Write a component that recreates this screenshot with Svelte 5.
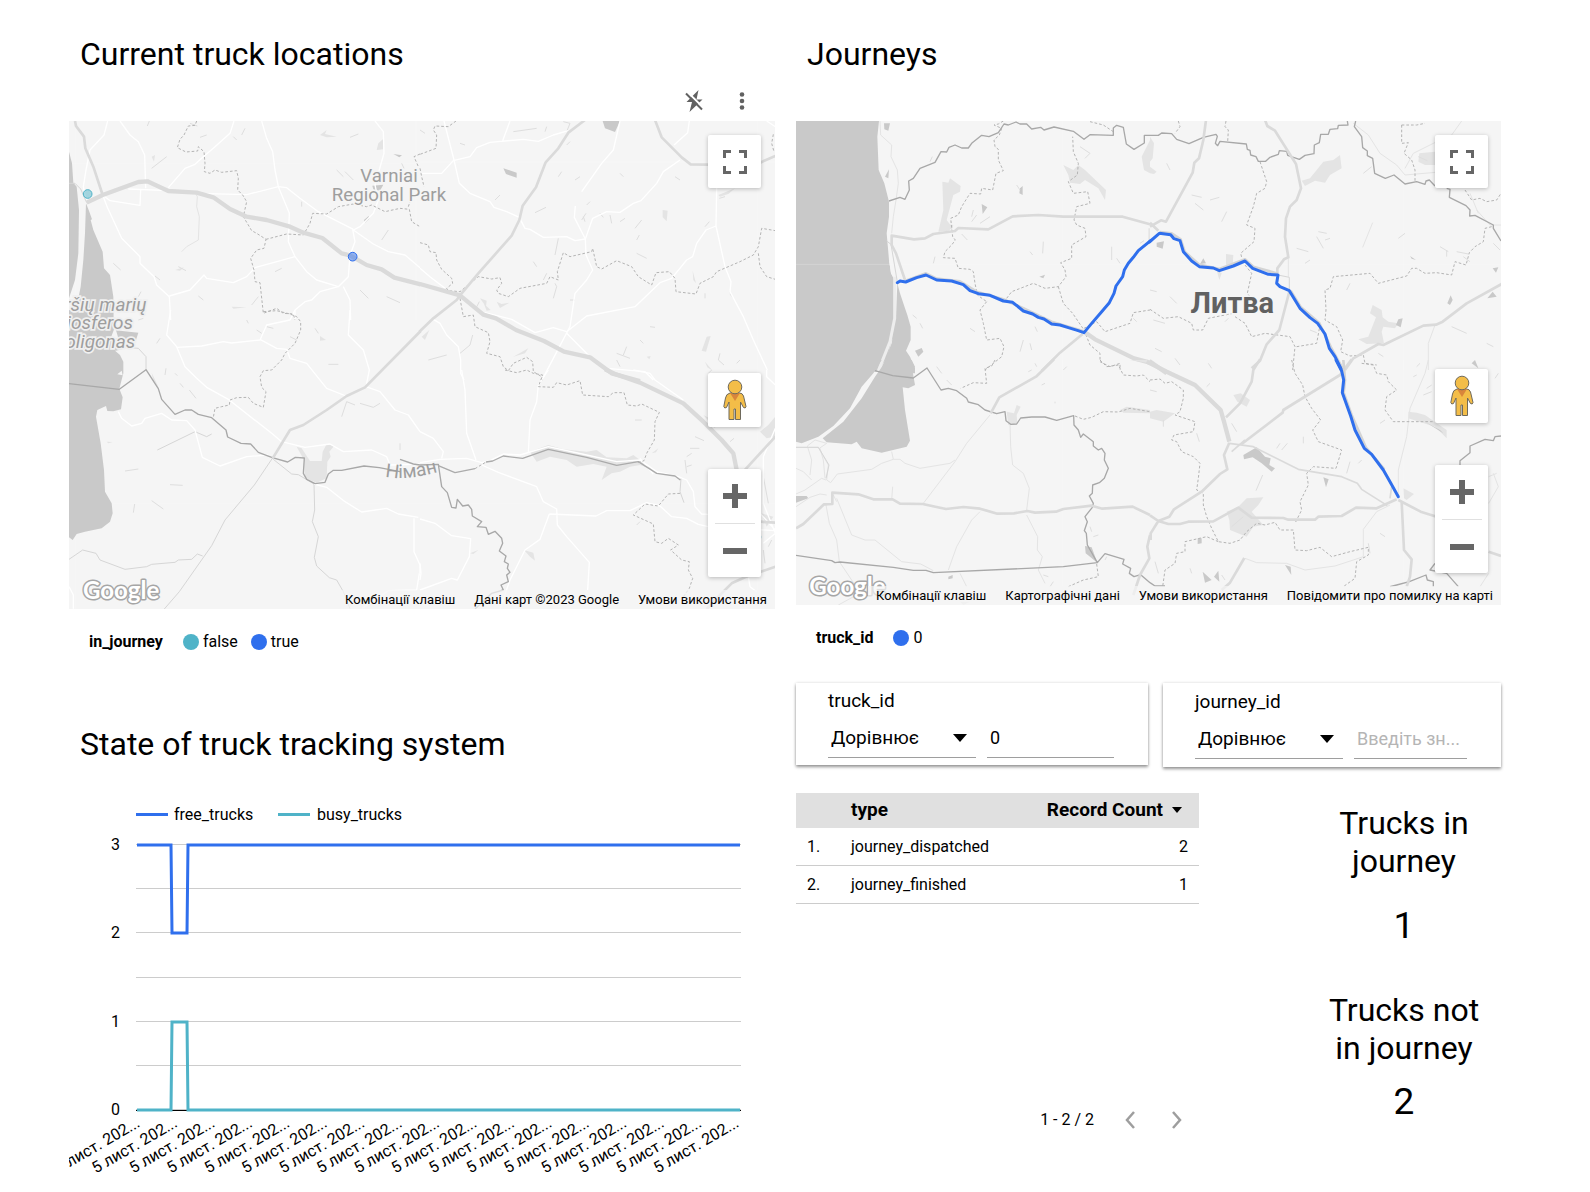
<script>
  // Map geometry is stored in thirds of a pixel, one group per tile.
  const truckTiles = [
    { x: -27, y: -303, shapes: [
      ['seam', 'M1068 303V900M27 430H1080M46 303V900'],
      ['water', 'M27 395L36 430L40 488L50 500L57 570L55 700L45 780L27 835Z'],
      ['water', 'M78 550L88 575L96 598L92 600L100 630L128 695L132 745L150 765L160 830V900H27V915L50 860L62 800L70 720L75 640Z'],
      ['water', 'M937 497L970 494L960 512L940 508ZM912 600L926 588L928 596L915 608ZM1000 402L1026 406L1018 412Z'],
      ['park', 'M955 370L972 355L970 388L950 390ZM780 345L800 330L795 342L830 350L800 352ZM345 750L372 742L360 752ZM515 860L560 862L520 866ZM275 410L285 405L282 425Z'],
      ['speck', 'M262 318L268 303M545 345L555 325M390 310L412 318M420 352L440 345M870 352L895 342M830 450L850 470M965 660L985 630M160 730L182 750M285 768L300 780M575 855L595 830M645 755L665 745M725 545V560M900 810L925 835M980 830L1020 848M235 830L243 815M430 840L415 828M355 740L378 752M520 350L530 360M1025 430L1032 445M275 445L320 410M855 455L880 480'],
      ['thin', 'M405 518L412 530L410 560L418 590L415 660L380 680L365 695'],
      ['road', 'M143 303L132 345L90 390L78 450L70 500L80 548M180 303L210 345L235 365L254 405L257 505'],
      ['road', 'M128 525L142 562L185 655L240 710L240 730L282 770L290 795L328 830L332 900M128 525L150 542L240 556L242 510M205 507L325 512M410 520L560 524L655 500L680 503L720 535L775 575L880 628'],
      ['road', 'M522 303L510 340L460 385L430 410L405 433L375 445L325 503M605 303L620 355L638 395L645 450L655 500L688 580L685 665L705 710L740 755L770 780L835 800L865 770L870 706L885 665L878 628'],
      ['road', 'M328 828L390 810L432 765L440 775L520 788L560 770L585 743L705 710M835 800L780 815L755 840L735 845L705 870V900M850 800L870 840L872 900'],
      ['road', 'M945 303L970 335L972 400L962 435L945 495L955 540L940 580L900 620L880 630L940 672L985 695L1035 705L1080 743'],
      ['dash', 'M410 303L405 316L385 318L372 345L360 358L352 383L378 396L413 393L415 380L432 395L435 430L433 455L450 460L465 450L485 457L530 452L535 475L533 510L548 525L560 545L550 590L575 632L590 640L618 658L612 685L590 690L572 715L582 750L585 785L600 788L610 880L650 865L670 880L700 882L705 900'],
      ['dash', 'M618 658L680 642L730 645L750 610L758 580L800 582L835 560L880 552L920 560L935 555L975 575L1020 565L1048 568L1055 605L1080 620M1080 402L1062 410L1075 440M1045 560L1050 545'],
      ['minor', 'M27 490H45L62 507L80 548'],
      ['highway', 'M45 303L48 318L72 350L76 385L100 440L128 525'],
      ['motorway', 'M80 548L128 525L235 486L262 484L325 513L410 518L460 532L510 567L560 590L620 600L690 620L730 638L787 654L845 700L870 706L920 735L965 748L1003 773L1082 793']
    ]},
    { x: 1053, y: -123, shapes: [
      ['seam', 'M1013 123V870M0 246H1066'],
      ['water', 'M548 123H600L585 156L555 145ZM250 265L290 278L290 293L258 282Z'],
      ['park', 'M728 390L743 392L740 424L728 412ZM845 812L860 770L872 768L858 815ZM180 655L200 662L198 680ZM230 665L240 684L268 668L245 672ZM895 345L945 325L925 342L900 350ZM855 845L878 872L862 862ZM680 830L692 828L688 838ZM192 672L212 690L200 692Z'],
      ['park', 'M280 830L325 805L315 820ZM928 630L940 655L930 645ZM818 572L828 610L820 600ZM5 770L28 750L15 780Z'],
      ['speck', 'M345 398L378 382M440 195L450 185M465 300L480 290M415 290L425 275M485 420L498 400M490 410L495 425M645 445L665 420M575 430L570 405M600 425L615 415M400 655L410 620L405 610M450 660H465M415 475L405 525M340 545L350 560M370 600L380 580M650 520L680 535M650 480L658 465M855 440L868 425M765 290L780 300M600 280L610 290M375 155L380 140M280 155L350 145M0 150L15 160M120 190L135 195M165 690L178 665M590 820L630 835M600 860L590 840M900 820L895 840L912 855M950 850L960 840M855 655V640M660 780L670 790M620 800L610 825M225 360L240 345M25 840L80 825M120 820L150 795L158 765M500 375L510 365M540 400L550 412M430 125L450 130L440 155M898 355L915 350M690 740L705 742'],
      ['road', 'M72 123L102 240L118 310L150 340L210 365L222 382L260 395L298 412L315 445L330 448L370 472L440 470L465 482L496 477L518 415L560 395L600 397L640 370L663 362L710 310L730 275L780 240'],
      ['road', 'M0 280H65L100 242L150 230L170 203L210 187L310 178L355 184L400 165L445 152M270 123L248 182M600 123L580 210L545 250L485 335M466 378L463 412L496 477L498 525L518 570L500 600L465 640L450 740L370 892'],
      ['road', 'M808 123L803 158L762 195M890 323L888 438L858 450L830 490L818 530L800 540L755 595L720 608L645 680L500 708L440 755L400 743L345 758L275 718L195 698M440 760L510 830M888 438L915 560L933 605L930 635L970 710L1000 780L1042 870M0 565L30 590L75 625M40 718L60 730L80 765L115 800L122 840V880L132 900M570 866L675 875L700 900M1040 123L1066 140'],
      ['dash', 'M108 123L85 140L45 138L40 150L50 165L48 205L0 223M0 488L25 495L30 515L48 518L50 540L65 568L95 595L98 610L80 625L85 632L120 635L175 590L215 597L240 593L245 610L230 630L235 640L265 650L300 625L380 610L390 590L415 600L412 575L430 518L450 530L515 515L518 505L530 560L545 567L590 542L635 560L655 590L695 615L708 578L748 575L765 595L768 635L828 642L840 610L880 590L890 575L960 545L1000 525L1015 500L1025 445L1066 452'],
      ['dash', 'M1015 520L1020 560L1040 590L1066 598M1060 163L1055 190L1062 215M120 655L130 710L160 705L165 740L205 758L210 785L200 820L240 830L250 860L265 872L280 850L320 832L338 845L340 875L365 890L368 905M0 265L5 290L12 320'],
      ['highway', 'M495 120L445 158L415 205L377 247L348 322L308 377L298 420L275 467L175 580L120 646L110 660L40 715L-2 755M705 120L725 172L785 232L812 253L865 254M1020 248L1066 228'],
      ['motorway', 'M0 612L120 646L190 704L228 715L288 750L372 783L432 815L510 832L575 880L660 903']
    ]},
    { x: -27, y: 567, shapes: [
      ['seam', 'M27 580H1080M46 120V896'],
      ['water', 'M27 0H160L160 50L180 62L235 68L228 90L200 85L195 110L165 122L180 135L190 155V190L178 236L188 262L183 298L160 304L142 303L138 288L112 300L108 320L122 400L132 480L135 545L155 580L158 610L150 635L125 655L75 665L50 672L38 690L27 682Z'],
      ['land', 'M172 193L185 182L188 196ZM150 90L165 50L175 85Z'],
      ['park', 'M710 410L725 415L750 453H785L788 425L800 402L822 408L808 425L812 440L802 455L800 505L770 518L735 505L732 450ZM780 78L798 90L780 92ZM140 395L158 396L145 400ZM275 188L295 230L280 215Z'],
      ['speck', 'M195 483L235 477M330 524L368 526M275 572L310 597M220 608L224 582M315 195L318 175M360 220L370 232M345 190L352 197M388 240L408 265M805 163H835M690 80L710 90M765 55L775 70M1020 420V400M565 40L560 30M590 60L605 70M290 100L300 85M885 285L860 275L845 320M900 280L940 292L960 280M235 30L250 25M620 50L640 55'],
      ['minor', 'M292 420L405 365L440 380L455 372M27 748L68 720L108 730L120 750L195 778L260 770L275 763L345 757L355 750L395 748L412 732L428 738M640 448L695 492L715 494L762 522L764 600L757 635L775 680L763 742L770 768L808 803L830 810L850 845L870 896M637 445L583 525L495 630L455 707L358 845L312 898'],
      ['minor', 'M165 122L200 112L235 115L258 140V180'],
      ['road', 'M332 0L320 75L350 110L375 170L410 205L440 232L505 268L635 370L665 395L735 412L810 402L850 425L935 420L980 440L990 465L1080 462M350 112L425 108L490 95L515 99L600 90L620 45L690 30L705 0M600 88L650 115L680 118L690 145L740 160L800 235L858 258'],
      ['road', 'M870 0L865 75L910 120L928 180L918 230L960 245L1005 300L1045 315L1080 365M175 305L185 325L215 348L245 340L255 325L305 310L335 330L380 332L405 360L427 442L480 468L560 440L625 435M762 522L800 532L855 575L905 606L980 595L1015 612L1075 622M1062 625V725L1080 765V790M1078 790L1070 840L985 842L905 896M27 830L40 855V896'],
      ['dash', 'M610 5L650 2L690 12L710 20L722 35V60L705 100L675 130L665 150L635 180L610 182L600 200L605 232L618 245L610 292L580 280L565 262L530 263L510 270L508 285L485 290L465 295L460 322'],
      ['border', 'M27 221L178 238L258 179L295 236L305 268L345 313L375 300H395L415 313L455 323L498 360L503 381L543 400L572 402L595 427L637 443L683 456L706 442L733 444L730 490L740 508L765 521L795 517L805 492L820 481H845L912 468L958 473L1020 485'],
      ['highway', 'M1082 63L915 232L860 258L800 300L730 345L690 360L638 445']
    ]},
    { x: 1053, y: 747, shapes: [
      ['seam', 'M0 400H1066M1013 0V717'],
      ['park', 'M330 245L385 225L430 238L500 245L530 240L560 262L620 265L640 255L700 300L660 285L630 290L600 305L575 310L545 330L560 290L520 282L470 290L440 270L390 260L350 275ZM1020 185L1045 165L1066 140V200L1040 205ZM850 135L890 155L885 175ZM1025 430L1060 440L1040 470ZM695 250L715 235L708 247ZM150 550L175 540L160 552ZM312 540L340 548L345 572L330 560Z'],
      ['speck', 'M825 200L852 212M810 235H838M800 260L815 250M800 290L815 285M795 270L800 310M650 465L660 455M645 150H665M890 200L900 210M930 215L942 205M1030 320L1045 400M1030 540L1035 580M1045 530L1055 510M875 0L865 10'],
      ['minor', 'M783 325L780 365L792 398'],
      ['road', 'M125 0L135 60L140 190L168 270M385 0L355 45L350 95L330 150L325 250M0 185L40 205L70 245L65 265M0 278L60 268L140 265L185 278L210 272L250 252L300 255L385 230L500 255L590 275L660 270L710 305L775 320L800 330L820 365L825 410L845 432L865 433'],
      ['road', 'M185 285L235 307L350 350L370 395L410 417L412 465L440 500L508 577L503 660M660 265L700 312M388 432L528 438L560 422H630L680 398L720 408L755 440L800 445L835 463L865 470M388 432L360 508L315 540L270 630L240 717M0 447L45 460L95 497L152 506L148 560L112 630L95 625L0 660M0 580L3 610L0 630M640 0L690 10L705 30L790 90M985 620L990 650L1010 665M1066 175L1030 260V400L1066 490L1030 520M1020 430L1066 480M1040 0V20L1066 45M865 470L1066 482'],
      ['dash', 'M255 0L290 8L320 0L340 10L368 15L355 50L400 52L410 38L440 45L480 32L488 75L565 80L580 68L612 68L622 105L650 108L665 102L718 127L705 155L703 210L680 250L672 272L655 278'],
      ['dash', 'M780 370L745 372L715 408L675 402L640 435L700 462L705 515L725 520L745 505L775 525L752 540L785 570L808 575L805 600L818 625L808 655L790 680'],
      ['border', 'M-60 268L-20 282L0 285L55 283L65 350L82 368L95 412L108 414L112 388L128 408L145 405L155 418L157 438L185 455L172 470L198 472L205 493L225 484L245 505L248 520L238 543L258 558L253 575L265 582L262 595L270 607L260 615L265 635L243 645L250 660L215 670L195 690L165 717'],
      ['rivers', 'M55 287L105 308L165 296M198 276L218 273L250 258L308 265L385 238L500 262L590 286L655 275L710 310L765 318L781 330'],
      ['riverdash', 'M165 296L198 276'],
      ['highway', 'M970 305L1066 200M1066 590L975 622L935 640L900 675L860 717M1020 455L1066 458'],
      ['motorway', 'M555 -2L585 12L660 38L790 100L850 155L905 210L940 250L950 300']
    ]}
  ];

  const journeyTiles = [
    { x: -18, y: -33, shapes: [
      ['water', 'M18 33H267L262 80L266 180L283 220L297 275V320L290 370L297 450L303 490L318 518V680L292 740L265 785H18Z'],
      ['land', 'M297 450L303 490L318 518V680L305 690L292 740L262 790H275L318 690V620L322 520L310 470Z'],
      ['water', 'M322 520L330 550L345 595L352 615L362 650V690L348 722L360 740L375 775V790H268L305 700L318 620ZM375 722L395 714L400 725L385 740ZM575 282L592 292L578 312ZM690 235L698 228L698 255L688 250ZM282 40H300L295 62L283 58ZM285 200L297 178L295 205ZM748 500L765 494L760 505Z'],
      ['spit', 'M314 500V625L300 695L264 785'],
      ['park', 'M457 215L475 218L480 205L512 228L510 245L490 255L470 330L485 350L478 362L445 365L460 300ZM820 165L850 180L865 165L885 180L948 240L945 270L925 235L885 210L870 222L840 218L835 195ZM1055 140L1080 90V190L1062 180ZM460 340L490 345L485 360ZM1075 355H1080V395H1075Z'],
      ['seam', 'M18 463H1080M818 33V780'],
      ['speck', 'M420 155L427 140M515 372L532 390M545 320L550 300M570 340L600 320M430 460L435 440M965 410V450M980 445L990 460M1050 400L1062 392M760 395L758 430M720 425L728 435M690 725L700 690M735 650L742 665M368 615L380 625M870 110L900 130L885 145M540 655L555 665M720 700L725 720M1030 625L1040 635M680 225L690 240M830 770L820 780M390 640L398 655M560 315L545 335'],
      ['thinner', 'M270 33L272 75L305 105L303 140L322 180L325 220L318 270L310 320L305 370'],
      ['minor', 'M290 393L303 403L322 516'],
      ['dash', 'M640 33L625 42L612 45L635 55L628 75L612 90L615 110L625 118V150L640 182L618 190L608 240L575 235L572 252L540 250L515 290L505 315L482 325L488 380L496 390L485 405L465 425L460 443L495 445L505 475L540 478L550 485L555 520L562 555L590 575'],
      ['dash', 'M650 565L665 545L730 520L765 535L805 530L828 500L825 480L812 458L845 445V405L888 380L885 355L860 345L852 330L860 290L900 280L893 245L850 250L835 215L862 195L865 160L850 125L848 80M805 530L820 580L848 610L882 660L900 705L930 730V755L960 770L990 760V780M900 35L940 45L970 65M590 575L570 600L580 640L590 690L630 685L642 710L635 740L585 780M882 655L920 635L945 665L1020 640L1030 608L1080 600'],
      ['border', 'M297 273L330 262L345 268L358 240L356 213L370 205L390 175L435 157L453 125L470 126L477 112L495 105L515 114H535L545 100L575 76L597 80L625 68L642 42L655 45L678 36L690 42H710L725 57L752 52L762 60L792 51L850 64L882 88L900 74L970 76V54L980 46L1000 52L1009 102L1032 118L1063 99V76H1080'],
      ['highway', 'M345 510L318 430L305 405L305 377L372 388L405 385L430 372L495 363L505 354L595 358L668 319L745 315L820 320H998L1080 343M878 672L810 728L755 783'],
      ['motorway', 'M885 667L915 688L1032 745L1080 758'],
      ['under', 'M347 512L408 490L440 506L510 514L560 545L640 568L700 595L785 635L882 664'],
      ['route', 'M322 518L330 513L347 516L380 503L408 495L440 510L485 513L520 524L540 542L565 551L600 556L640 573L668 577L700 603L728 612L745 622L762 627L785 642L810 645L835 653L862 661L882 668L905 640L935 605L958 578L972 550L978 528L998 500L1003 480L1015 460L1030 442L1045 422L1082 392']
    ]},
    { x: 1062, y: -33, shapes: [
      ['park', 'M455 212L480 205L520 155L550 150L570 135L575 175L540 195L525 218L495 212L465 228ZM0 80L12 100L8 145L0 155ZM0 170L20 185L12 192L0 190ZM625 688L655 680L678 622L660 610L668 585L695 600L698 622L715 635L745 640L735 655L700 650L695 665L702 700L650 702ZM808 130L855 125V165L825 165L805 155ZM228 432L250 435L248 465L228 465ZM200 480L215 490L208 510Z'],
      ['water', 'M20 398L42 394L38 416L20 410ZM745 628L758 625L752 652L738 645ZM892 580L902 556L908 570L900 585ZM1028 475L1045 472L1038 488ZM1012 565L1028 545L1040 560ZM160 445L168 460L150 462ZM780 438L798 450L785 446ZM965 760L975 750L985 775Z'],
      ['seam', 'M0 463H1053M760 33V780'],
      ['thin', 'M668 338L638 412'],
      ['speck', 'M125 255L155 262M180 270L208 262M135 280L160 300M230 305L215 335M505 365L530 370M500 380L520 415M525 390L540 385M440 415L475 425M640 190L665 170M805 140L832 152M1010 700L1030 710M890 420V440M870 410L895 425M920 425L955 432M940 440L960 455M1030 400L1050 420M15 715L35 725M75 745L90 765M10 630L45 640M60 560L80 580M465 460L480 450M745 385L765 370M60 180L50 160M700 740L685 730M480 660L500 668M0 540L20 545M590 540L600 520M225 635L235 625M905 650L950 670'],
      ['thinner', 'M610 40L655 75L690 130L740 165L765 195L880 185M765 175L790 130L880 85L905 75L935 33M980 300L1020 345H1053M960 250L985 310M835 780V700L855 645M415 445V500'],
      ['dash', 'M85 33L90 50L75 70M228 33L225 50L235 60L233 95M330 155L350 215L345 235L320 250L310 290L290 345L315 355L312 395L272 430L275 442M755 45H800L825 40M755 45V100L775 98L762 130L785 150L795 180V215'],
      ['dash', 'M1025 350L1005 355L1000 395L975 410L958 428L948 465L915 455L905 495L860 488L825 490L800 475L785 475L770 498L685 520L660 490L550 500L540 535L525 540L528 600L525 630L560 650L578 690L572 725L600 738L640 735L645 760L680 765M255 620L285 640L305 680L345 670L420 680L435 710L428 780M0 598L40 625L85 620L125 640L130 660L158 660L175 625L250 610M440 710L500 700L510 645M945 240L965 270L990 265L1010 275L1040 270L1053 250M285 465L305 490L292 550L300 560'],
      ['border', 'M0 76H25L35 69L65 71L80 88L117 101L160 82L198 73L202 79L196 100L203 107L210 94L289 102L292 118L300 121L302 135L318 140L325 154H347L360 142L385 133L388 122L410 124L413 136L448 148L465 136L492 131L493 105L508 98L512 73H535L540 58L563 56L565 46L594 45L592 33M617 33L613 50L635 80L638 113L652 123V137L668 145L674 190L706 205L732 195L765 222L800 215L825 223L828 213L838 210L855 228M890 235L900 238L898 262L948 287L960 300L959 318L975 316L1030 345V355L1053 393'],
      ['highway', 'M168 30L160 90L147 145L133 158L128 188L48 335L33 331L0 350M345 30L352 48L375 62L438 162L453 235L440 270L420 290L408 325L405 380L415 442L402 448L382 475V490M418 545L388 660L350 703L330 752L305 775M0 338L25 362M1055 522L950 580L878 635L858 644L820 647L700 705L685 702L610 745L585 780'],
      ['minor', 'M384 495L418 502L418 545'],
      ['motorway', 'M-2 753L50 790'],
      ['under', 'M30 366L65 370L92 388L104 425L148 464L208 477L285 448L310 470L384 491M422 542L453 592L507 638L543 712L580 780'],
      ['route', 'M-2 396L28 370L62 374L72 386L90 392L100 425L125 453L148 470L190 474L208 482L250 468L285 453L308 475L355 493L384 495L380 520L390 530L418 542L450 595L480 623L503 640L525 672L538 715L555 740L576 782']
    ]},
    { x: -18, y: 717, shapes: [
      ['water', 'M18 0H275L250 40L215 80L180 145L130 198L85 230L35 250L18 245Z'],
      ['water', 'M290 0H365L375 20L368 35L375 75L355 85L338 82L345 150L360 242L350 260L275 278L215 265L200 245L185 253L110 247L98 235L160 185L215 115L255 50ZM18 408L50 408L55 415L18 428ZM885 558L905 562L922 608L887 580ZM475 650L488 645V655L475 658Z'],
      ['park', 'M650 155L672 160L680 135L692 140L680 165L682 190L655 195ZM990 150L1010 140L1080 150V160L1000 158ZM510 725H540L520 735ZM1020 0H1080V10Z'],
      ['seam', 'M818 0V735'],
      ['speck', 'M755 75L765 70M795 130V125M715 35L725 30M740 20L735 10M905 515L900 500M925 525L910 530M945 600L950 590M760 645L775 650M790 665L780 680M470 60L485 75M440 20L455 40'],
      ['thinner', 'M88 265L110 250L75 240L52 258L65 300L60 345M18 262H85L115 315L110 360L122 368L142 342L245 328L275 310L310 298L305 275M310 298H330L345 310L390 325L480 310L495 300M600 165L530 250L495 305L400 430M660 190L662 260L668 315L700 340L718 385L710 450M18 325L40 335L65 360M18 402L45 390L95 355L108 360M18 440L60 412L90 402L110 405M90 265L100 300L105 355M308 380L305 420M130 405L140 425M108 435L118 490L140 540L148 605L205 690M140 415L185 525L225 540H255L335 605L392 612L430 632M570 455L545 480L500 560L475 630M710 465L743 530L742 570L757 590L745 630L765 670M510 640L530 680M145 735L200 705'],
      ['minor', 'M18 262H85L117 315L108 355'],
      ['dash', 'M615 0L605 18L585 25L590 70L550 68L512 85M855 168L880 178L905 172L940 155L985 156L1020 145L1080 155M930 0L950 20L985 15L1000 45L1040 48L1060 45L1080 65M920 612L925 650L880 660L835 680'],
      ['border', 'M255 32L308 47L370 54L411 24L453 90L475 85L500 92L530 115L535 126L565 134L585 150L620 161L645 155L648 182L662 193L680 192L692 174L725 171H765L800 181L851 167L852 195L865 210L872 232L880 222L910 245V258L925 270L935 265L945 280L943 300L955 325L943 355L928 368L908 375L907 400L898 408L910 430L907 442L885 470L892 485L883 512L889 520L892 555L922 608L820 620L430 638L408 631H370L310 622L150 606L135 608L125 602L18 586M922 608L945 581L1002 598L998 612L1022 625L1018 640L1032 650L1052 644L1080 668'],
      ['highway', 'M792 -2L738 50L628 112L602 160M18 505L40 492L102 433L127 432V398L205 403L250 418H308L330 431L398 432L468 447L520 441L570 446L622 461L672 460L712 453L735 458L798 455L820 447L905 437L937 446L1028 440L1080 465M1080 525L1072 560L1078 595L1050 645L1030 705']
    ]},
    { x: 1062, y: 717, shapes: [
      ['park', 'M230 455L265 440L290 415L340 412L325 435L305 455L340 495L310 500L290 530L240 510L238 480ZM760 385L792 402L770 420L762 415ZM775 155L800 158L825 165L890 210V235L855 200L775 175ZM250 105L272 100L300 120L290 140L262 125ZM0 155L20 150L75 160L40 185L0 175Z'],
      ['water', 'M280 285L320 262L345 290L362 295L358 315L375 325L365 335L335 310L308 292L282 298ZM520 352L536 358L528 382ZM158 635L185 660L165 668ZM192 650L205 632L208 665ZM405 615L422 620L424 645ZM143 535H155V550L143 552ZM825 185L870 210L880 220Z'],
      ['seam', 'M760 0V735'],
      ['speck', 'M338 345L318 392M175 10L185 25M790 50L800 45M830 85L845 75M820 105L845 95M1035 55L1045 40M395 270L412 250M380 265L390 250M590 340L600 305M625 310L635 300M690 190L705 180M140 220L148 245M125 640L120 625M215 645L225 660M245 500L280 470M655 550L660 580M170 80L180 70M40 180V200M460 230V250M690 520L705 530M260 215L245 190M0 90L20 95M800 20L810 10M15 605L25 640'],
      ['thinner', 'M835 0L825 40L780 145L770 230L745 330L745 400M285 595L320 608L410 610L465 630L555 618L610 600L640 590V508L680 455L720 435M1016 350L1040 340M1016 430L1045 380L1030 340M1016 640L990 680'],
      ['dash', 'M0 60L30 57L45 70L65 65L100 90V115L90 155L75 165L135 185L130 215L72 225L65 240L80 245L95 275L130 290L150 310L145 355L140 390L160 400V435L170 470L185 505L205 545L240 550L270 540L290 515L320 490L345 495L375 487L390 510L430 510L435 570L470 572L510 562L545 590L600 575L655 562V585L620 605L615 655L580 680'],
      ['dash', 'M425 0L435 40L458 75L465 110L485 145L512 180L488 210L505 245L575 270L558 325L490 320L470 340L475 375L450 425L455 450L435 490M635 10L670 15L680 40L710 45L715 65L740 90L710 110L705 150L730 185L850 185M205 545L170 530L105 545V575L80 580L75 610L45 630L38 680'],
      ['border', 'M1053 228L1035 230L1030 242L1005 238L960 258V278L930 302V315M720 680L740 675L778 665L828 645L832 660L850 665V680M855 610L840 630L890 640L925 680M0 668L15 678H45'],
      ['highway', 'M330 -2L310 30L305 65L270 130L228 172M605 -2L570 45L400 150L398 158L275 252M238 248L222 285L232 328L210 342L155 395L72 448L58 470L25 483L0 466M25 483L55 492H90L115 485L190 484L265 443L305 473L400 474L415 479H495L505 470L575 468L618 443L680 445L740 418M25 483L2 520V540M283 594L240 668L215 690M755 425L762 570L785 598L780 650L770 680M745 420L812 455L860 470M1016 575L1053 588'],
      ['minor2', 'M238 250L310 260L445 328L575 350L622 370L635 388L712 437M720 415L725 380M245 275L285 240'],
      ['motorway', 'M-10 5L50 35L135 75L212 150L222 185L238 245'],
      ['under', 'M580 0L585 60L581 98L605 165L648 263L703 328'],
      ['route', 'M558 0L575 33L581 60L577 98L602 168L615 210L643 265L665 283L700 330L720 365L745 410']
    ]}
  ];

  const gridLines = [844, 888, 932, 977, 1021, 1065, 1109];
  const yTicks = [[3, 844], [2, 932], [1, 1021], [0, 1109]];
  const xTicks = Array.from({ length: 17 }, (_, i) => 141 + (i * 599) / 16);

  const rows = [
    { type: 'journey_dispatched', count: 2 },
    { type: 'journey_finished', count: 1 }
  ];
  let truckId = $state('0');
  let journeyId = $state('');
</script>

{#snippet tileShapes(tiles)}
  {#each tiles as tile}
    <g transform="translate({tile.x} {tile.y})">
      {#each tile.shapes as [kind, d]}
        <path class={kind} {d} />
      {/each}
    </g>
  {/each}
{/snippet}

{#snippet controls()}
  <button class="ctl fullscreen" aria-label="Fullscreen">
    <svg width="24" height="24" viewBox="0 0 24 24"><path fill="#666" d="M0 0H8V3H3V8H0ZM16 0H24V8H21V3H16ZM0 16H3V21H8V24H0ZM21 16H24V24H16V21H21Z" /></svg>
  </button>
  <div class="stack">
    <button class="ctl pegman" aria-label="Street View">
      <svg width="24" height="42" viewBox="0 0 24 42">
        <path d="M7 14Q3 15 2.500 19L.8 27.500Q1.500 30 3.500 28.500L6 23V40.500H11V30H12.500V40.500H17.500V23L20.500 28.500Q22.500 30 23 27.500L20.500 17Q19.500 14 16.500 14Z" fill="#f3bd48" stroke="#6f6a5c" stroke-width="1" />
        <path d="M7 14H17L12 22Z" fill="#d9853b" />
        <circle cx="12" cy="8" r="6.800" fill="#f3bd48" stroke="#6f6a5c" stroke-width="1" />
      </svg>
    </button>
    <div class="zoom">
      <button aria-label="Zoom in"><svg width="24" height="24" viewBox="0 0 24 24"><path fill="#666" d="M9 0H15V9H24V15H15V24H9V15H0V9H9Z" /></svg></button>
      <span class="rule"></span>
      <button aria-label="Zoom out"><svg width="24" height="24" viewBox="0 0 24 24"><path fill="#666" d="M0 10H24V16H0Z" /></svg></button>
    </div>
  </div>
{/snippet}

<main>
  <section class="column">
    <h1>Current truck locations</h1>
    <div class="tools">
      <button aria-label="Interactions off">
        <svg width="20" height="24" viewBox="0 0 20 24">
          <path fill="#616161" d="M14.500 1L2.500 13H8L5.500 23L18.500 10.500H12.500Z" />
          <path stroke="#fff" stroke-width="2" d="M3.500 3L19.500 19" />
          <path stroke="#616161" stroke-width="2" d="M2 4.500L18 20.500" />
        </svg>
      </button>
      <button aria-label="More">
        <svg width="20" height="24" viewBox="0 0 20 24" fill="#616161"><circle cx="10" cy="5.500" r="2.300" /><circle cx="10" cy="12" r="2.300" /><circle cx="10" cy="18.500" r="2.300" /></svg>
      </button>
    </div>

    <div class="map trucks">
      <svg class="canvas" viewBox="0 0 2118 1464" preserveAspectRatio="xMidYMid slice">
        {@render tileShapes(truckTiles)}
        <text class="place" x="960" y="184" text-anchor="middle">Varniai</text>
        <text class="place" x="960" y="240" text-anchor="middle">Regional Park</text>
        <g class="reserve" text-anchor="end">
          <text x="232" y="570">Kuršių marių</text>
          <text x="192" y="625">biosferos</text>
          <text x="199" y="681">poligonas</text>
        </g>
        <path id="nemunas" fill="none" d="M948 1066Q1020 1084 1150 1040" />
        <text class="river"><textPath href="#nemunas">Німан</textPath></text>
        <circle cx="56" cy="219" r="13" fill="#4fb3c8" fill-opacity=".5" stroke="#4fb3c8" stroke-width="3" />
        <circle cx="851" cy="407" r="13" fill="#2f6fed" fill-opacity=".5" stroke="#2f6fed" stroke-width="3" />
        <circle cx="2064" cy="1248" r="13" fill="#4fb3c8" fill-opacity=".8" />
        <text class="logo" x="42" y="1434">Google</text>
      </svg>
      {@render controls()}
      <div class="credits">
        <button>Комбінації клавіш</button><span>Дані карт ©2023 Google</span><a href="#terms">Умови використання</a>
      </div>
    </div>
    <div class="legend">
      <b>in_journey</b><i class="dot teal"></i><span>false</span><i class="dot next"></i><span>true</span>
    </div>

    <h1 class="second">State of truck tracking system</h1>
    <svg class="chart" viewBox="69 763 706 417">
      <path class="free" d="M136 814.500H168" /><text x="174" y="820">free_trucks</text>
      <path class="busy" d="M278 814.500H310" /><text x="317" y="820">busy_trucks</text>
      {#each gridLines as y}
        <path class="grid" d="M136 {y}.5H741" />
      {/each}
      {#each yTicks as [label, y]}
        <text x="120" y={y + 6} text-anchor="end">{label}</text>
      {/each}
      <path stroke="#000" d="M136 1110.500H741" />
      <path class="free" d="M137 845H171L172 933H187L188 845H740" />
      <path class="busy" d="M137 1110H171L172 1022H187L188 1110H740" />
      {#each xTicks as x}
        <text class="tick" text-anchor="end" transform="translate({x} 1126) rotate(-30)">5 лист. 202...</text>
      {/each}
    </svg>
  </section>

  <section class="column">
    <h1>Journeys</h1>
    <div class="tools"></div>
    <div class="map journeys">
      <svg class="canvas" viewBox="0 0 2115 1452" preserveAspectRatio="xMidYMid slice">
        {@render tileShapes(journeyTiles)}
        <text class="country" x="1309" y="576" text-anchor="middle">Литва</text>
        <text class="logo" x="40" y="1421">Google</text>
      </svg>
      {@render controls()}
      <div class="credits">
        <button>Комбінації клавіш</button><span>Картографічні дані</span><a href="#terms">Умови використання</a><a href="#report">Повідомити про помилку на карті</a>
      </div>
    </div>
    <div class="legend"><b>truck_id</b><i class="dot"></i><span>0</span></div>

    <div class="filters">
      <div class="filter">
        <label for="truck">truck_id</label>
        <div class="fields">
          <span class="pick"><select aria-label="truck_id condition"><option>Дорівнює</option></select></span>
          <input id="truck" type="text" bind:value={truckId} />
        </div>
      </div>
      <div class="filter last">
        <label for="journey">journey_id</label>
        <div class="fields">
          <span class="pick"><select aria-label="journey_id condition"><option>Дорівнює</option></select></span>
          <input id="journey" type="text" placeholder="Введіть зн..." bind:value={journeyId} />
        </div>
      </div>
    </div>

    <div class="summary">
      <div class="records">
        <table>
          <thead>
            <tr><th class="num"></th><th class="type">type</th><th class="count">Record Count<svg width="10" height="6" viewBox="0 0 10 6"><path d="M0 0H10L5 6Z" /></svg></th></tr>
          </thead>
          <tbody>
            {#each rows as row, i}
              <tr><td class="num">{i + 1}.</td><td>{row.type}</td><td class="count">{row.count}</td></tr>
            {/each}
          </tbody>
        </table>
        <div class="pager">
          <span>1 - 2 / 2</span>
          <button aria-label="Previous"><svg width="10" height="18" viewBox="0 0 10 18"><path d="M9 1L2 9L9 17" /></svg></button>
          <button aria-label="Next"><svg width="10" height="18" viewBox="0 0 10 18"><path d="M1 1L8 9L1 17" /></svg></button>
        </div>
      </div>
      <div class="scores">
        <p class="title">Trucks in journey</p>
        <p class="value">1</p>
        <p class="title lower">Trucks not in journey</p>
        <p class="value near">2</p>
      </div>
    </div>
  </section>
</main>

<style>
  :global(body) { margin: 0; background: #fff; }
  main {
    display: grid;
    grid-template-columns: minmax(0, 706fr) minmax(0, 705fr);
    gap: 21px;
    padding: 35px 89px 12px 69px;
    font: 16px/20px Roboto, sans-serif;
    color: #000;
  }
  button { padding: 0; border: 0; background: none; font: inherit; color: inherit; cursor: pointer; }
  h1 { margin: 0; padding-left: 11px; font-weight: 400; font-size: 32px; line-height: 38px; }
  h1.second { margin-top: 50px; }
  .tools { height: 48px; display: flex; justify-content: flex-end; align-items: flex-end; gap: 28px; padding: 0 23px 4px 0; box-sizing: border-box; }
  .tools button { height: 32px; width: 20px; }
  .tools svg { display: block; }

  .map { position: relative; overflow: hidden; background: #f5f5f5; }
  .trucks { height: 488px; }
  .journeys { height: 484px; }
  .canvas { display: block; width: 100%; height: 100%; font-family: Roboto, sans-serif; }
  .canvas g path { fill: none; stroke-linejoin: round; }
  .canvas g .water { fill: #c9c9c9; }
  .canvas g .land { fill: #f5f5f5; }
  .canvas g .park { fill: #e4e4e4; }
  .canvas .spit { stroke: #ededed; stroke-width: 9; }
  .canvas .seam { stroke: #fff; stroke-opacity: .3; stroke-width: 2; }
  .canvas .speck { stroke: #dedede; stroke-width: 3; }
  .canvas .road { stroke: #fff; stroke-width: 4; }
  .canvas .thin, .canvas .thinner { stroke: #e4e4e4; stroke-width: 3; }
  .canvas .minor { stroke: #d6d6d6; stroke-width: 3; }
  .canvas .minor2 { stroke: #dadada; stroke-width: 5; }
  .canvas .dash, .canvas .riverdash { stroke: #b4b4b4; stroke-width: 3; stroke-dasharray: 8 6; }
  .canvas .border { stroke: #a8a8a8; stroke-width: 4; }
  .canvas .rivers { stroke: #ababab; stroke-width: 4; }
  .canvas .highway { stroke: #dadada; stroke-width: 8; }
  .canvas .motorway { stroke: #dadada; stroke-width: 13; }
  .canvas .under { stroke: #d4d4d4; stroke-width: 8; }
  .canvas .route { stroke: #2f6fed; stroke-width: 9; stroke-linecap: round; }
  .place { font-size: 56px; fill: #9e9e9e; stroke: #f5f5f5; stroke-width: 8; paint-order: stroke; }
  .reserve { font-size: 57px; font-style: italic; fill: #9e9e9e; stroke: #f0f0f0; stroke-width: 10; paint-order: stroke; }
  .river { font-size: 57px; fill: #9e9e9e; }
  .country { font-size: 87px; font-weight: 700; fill: #616161; stroke: #f5f5f5; stroke-width: 9; paint-order: stroke; }
  .logo { font: 700 72px Lato, sans-serif; fill: #fff; stroke: #a6a6a6; stroke-width: 9; stroke-linejoin: round; paint-order: stroke; }

  .ctl, .zoom { background: #fff; border-radius: 2px; box-shadow: 0 1px 4px rgba(0, 0, 0, .25); display: flex; align-items: center; justify-content: center; }
  .fullscreen { position: absolute; top: 14px; right: 14px; width: 53px; height: 53px; }
  .stack { position: absolute; right: 14px; bottom: 32px; width: 53px; display: flex; flex-direction: column; gap: 42px; }
  .journeys .fullscreen, .journeys .stack { right: 13px; }
  .pegman { height: 54px; }
  .zoom { flex-direction: column; height: 108px; }
  .zoom button { flex: 1; width: 100%; display: flex; align-items: center; justify-content: center; }
  .rule { width: 40px; height: 1px; background: #e0e0e0; }
  .credits { position: absolute; right: 0; bottom: 0; display: flex; gap: 3px; height: 19px; font-size: 13px; line-height: 19px; white-space: nowrap; background: rgba(245, 245, 245, .7); }
  .credits > * { padding: 0 8px; color: #000; text-decoration: none; }

  .legend { height: 66px; display: flex; align-items: center; padding-left: 20px; }
  .dot { width: 16px; height: 16px; border-radius: 50%; background: #2f6fed; margin: 0 4px 0 20px; }
  .dot.teal { background: #4fb3c8; }
  .dot.next { margin-left: 13px; }

  .chart { display: block; width: 100%; font: 16px Roboto, sans-serif; }
  .chart path { fill: none; }
  .chart .grid { stroke: #ccc; }
  .chart .free { stroke: #2f6fed; stroke-width: 3; }
  .chart .busy { stroke: #4fb3c8; stroke-width: 3; }

  .filters { display: grid; grid-template-columns: minmax(0, 352fr) minmax(0, 338fr); align-items: start; gap: 15px; margin-top: 12px; }
  .filter { padding: 8px 34px 7px 32px; box-shadow: 0 2px 3px rgba(0, 0, 0, .4), 0 0 3px rgba(0, 0, 0, .12); }
  .last { padding: 9px 34px 8px 32px; }
  .filter label { display: block; height: 20px; font-size: 19px; }
  .fields { display: flex; gap: 11px; margin-top: 9px; }
  .pick { position: relative; flex: 0 0 148px; }
  .pick::after { content: ''; position: absolute; right: 9px; top: 14px; border: 7px solid transparent; border-top: 8px solid #000; border-bottom: 0; pointer-events: none; }
  select, input { appearance: none; box-sizing: border-box; width: 100%; min-width: 0; height: 38px; border: 0; border-bottom: 1px solid #9e9e9e; border-radius: 0; padding: 0 3px 2px; background: none; font: 18px Roboto, sans-serif; color: #000; outline: 0; }
  select { font-size: 19px; }
  input { flex: 1; }
  input::placeholder { color: #b5b5b5; }

  .summary { display: grid; grid-template-columns: 403fr 194fr; gap: 108px; margin-top: 26px; }
  .records { display: flex; flex-direction: column; }
  table { width: 100%; border-collapse: collapse; }
  th { background: #e0e0e0; height: 33px; padding: 0 0 2px; font-size: 19px; font-weight: 700; text-align: left; }
  th.type { font-size: 19px; }
  td { height: 37px; padding: 0; border-bottom: 1px solid #ccc; }
  .num { width: 44px; padding-left: 11px; }
  th.count, td.count { text-align: right; padding-right: 11px; }
  th.count { padding-right: 17px; }
  th svg { margin-left: 9px; vertical-align: 3px; }
  .pager { margin-top: auto; height: 36px; display: flex; align-items: center; justify-content: flex-end; padding-right: 6px; }
  .pager button { width: 32px; height: 32px; display: grid; place-items: center; margin-left: 15px; }
  .pager button:first-of-type { margin-left: 20px; }
  .pager path { fill: none; stroke: #9e9e9e; stroke-width: 2.500; }
  .scores { text-align: center; padding: 11px 0 14px; }
  .scores p { margin: 0 auto; }
  .scores .title { max-width: 170px; font-size: 32px; line-height: 38px; }
  .scores .value { margin-top: 24px; font-size: 37px; line-height: 44px; }
  .scores .lower { margin-top: 43px; }
  .scores .near { margin-top: 13px; }
</style>
